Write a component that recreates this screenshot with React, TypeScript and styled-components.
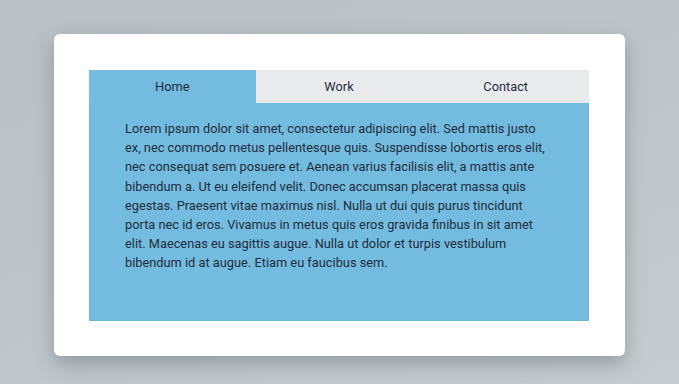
import { useState } from "react";
import styled, { createGlobalStyle } from "styled-components";

const GlobalStyle = createGlobalStyle`
  html, body {
    margin: 0;
    padding: 0;
    height: 100%;
  }
  body {
    font-family: Roboto, "Liberation Sans", sans-serif;
    background: linear-gradient(160deg, #b9c0c5 0%, #bfc6ca 55%, #c6cdcf 100%);
  }
`;

const tabs = ["Home", "Work", "Contact"];

const text =
  "Lorem ipsum dolor sit amet, consectetur adipiscing elit. Sed mattis justo ex, nec commodo metus pellentesque quis. Suspendisse lobortis eros elit, nec consequat sem posuere et. Aenean varius facilisis elit, a mattis ante bibendum a. Ut eu eleifend velit. Donec accumsan placerat massa quis egestas. Praesent vitae maximus nisl. Nulla ut dui quis purus tincidunt porta nec id eros. Vivamus in metus quis eros gravida finibus in sit amet elit. Maecenas eu sagittis augue. Nulla ut dolor et turpis vestibulum bibendum id at augue. Etiam eu faucibus sem.";

export default function App() {
  const [active, setActive] = useState(0);
  return (
    <Page>
      <GlobalStyle />
      <Card>
        <TabBar>
          {tabs.map((t, i) => (
            <Tab key={t} $active={i === active} onClick={() => setActive(i)}>
              {t}
            </Tab>
          ))}
        </TabBar>
        <Panel>
          <Text>{text}</Text>
        </Panel>
      </Card>
    </Page>
  );
}

const Page = styled.div`
  width: 679px;
  height: 384px;
  display: flex;
  justify-content: center;
  padding-top: 34px;
  box-sizing: border-box;
`;

const Card = styled.div`
  width: 571px;
  height: 322px;
  box-sizing: border-box;
  padding: 36px 36px 35px 35px;
  background: #fff;
  border-radius: 6px;
  box-shadow: 0 8px 20px rgba(60, 70, 80, 0.35);
  display: flex;
  flex-direction: column;
`;

const TabBar = styled.div`
  display: grid;
  grid-template-columns: repeat(3, 1fr);
  height: 33px;
`;

const Tab = styled.div<{ $active: boolean }>`
  display: flex;
  align-items: center;
  justify-content: center;
  font-size: 12.8px;
  color: #1f2d3d;
  background: ${(p) => (p.$active ? "#74bcdf" : "#e9eaec")};
  cursor: pointer;
`;

const Panel = styled.div`
  flex: 1;
  background: #74bcdf;
  border: 1px solid #6cb5da;
  border-top: none;
  padding: 16px 36px 0 35px;
`;

const Text = styled.p`
  margin: 0;
  font-size: 12.8px;
  line-height: 19.2px;
  color: #1f2d3d;
`;
